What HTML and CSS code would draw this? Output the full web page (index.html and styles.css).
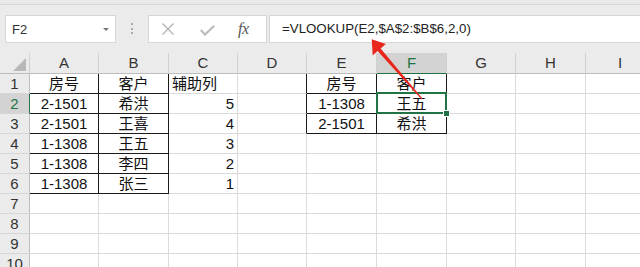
FILE: index.html
```html
<!DOCTYPE html>
<html>
<head>
<meta charset="utf-8">
<link rel="stylesheet" href="styles.css">
</head>
<body>
<div class="top"></div>
<div class="toolbar">
  <div class="namebox"><span class="nb-text">F2</span><span class="nb-arrow"></span></div>
  <div class="dots"><i></i><i></i><i></i></div>
  <div class="fxbox">
    <svg class="ic-x" width="12" height="12" viewBox="0 0 12 12"><path d="M0.5 0.5 L11.5 11.5 M11.5 0.5 L0.5 11.5" stroke="#b4b4b4" stroke-width="1.4" fill="none"/></svg>
    <svg class="ic-check" width="15" height="11" viewBox="0 0 15 11"><path d="M0.8 5 L5 9.6 L14.2 0.8" stroke="#bcbcbc" stroke-width="2.2" fill="none"/></svg>
    <span class="fx">fx</span>
  </div>
  <div class="formula">=VLOOKUP(E2,$A$2:$B$6,2,0)</div>
</div>
<div class="grid">
  <div class="corner"><svg width="13" height="13" viewBox="0 0 13 13"><path d="M13 0 L13 13 L0 13 Z" fill="#b8b8b8"/></svg></div>
  <div class="ch">A</div><div class="ch">B</div><div class="ch">C</div><div class="ch">D</div><div class="ch">E</div><div class="ch sel">F</div><div class="ch">G</div><div class="ch">H</div><div class="ch">I</div>

  <div class="rh">1</div>
  <div class="c ctr br bb">房号</div><div class="c ctr br bb">客户</div><div class="c lft">辅助列</div><div class="c br"></div><div class="c ctr br bb">房号</div><div class="c ctr br bb">客户</div><div class="c"></div><div class="c"></div><div class="c"></div>

  <div class="rh sel">2</div>
  <div class="c ctr br bb">2-1501</div><div class="c ctr br bb">希洪</div><div class="c rgt">5</div><div class="c br"></div><div class="c ctr br bb">1-1308</div><div class="c ctr br bb active">王五<span class="selbox"><span class="handle"></span></span></div><div class="c"></div><div class="c"></div><div class="c"></div>

  <div class="rh">3</div>
  <div class="c ctr br bb">2-1501</div><div class="c ctr br bb">王喜</div><div class="c rgt">4</div><div class="c br"></div><div class="c ctr br bb">2-1501</div><div class="c ctr br bb">希洪</div><div class="c"></div><div class="c"></div><div class="c"></div>

  <div class="rh">4</div>
  <div class="c ctr br bb">1-1308</div><div class="c ctr br bb">王五</div><div class="c rgt">3</div><div class="c"></div><div class="c"></div><div class="c"></div><div class="c"></div><div class="c"></div><div class="c"></div>

  <div class="rh">5</div>
  <div class="c ctr br bb">1-1308</div><div class="c ctr br bb">李四</div><div class="c rgt">2</div><div class="c"></div><div class="c"></div><div class="c"></div><div class="c"></div><div class="c"></div><div class="c"></div>

  <div class="rh">6</div>
  <div class="c ctr br bb">1-1308</div><div class="c ctr br bb">张三</div><div class="c rgt">1</div><div class="c"></div><div class="c"></div><div class="c"></div><div class="c"></div><div class="c"></div><div class="c"></div>

  <div class="rh">7</div>
  <div class="c"></div><div class="c"></div><div class="c"></div><div class="c"></div><div class="c"></div><div class="c"></div><div class="c"></div><div class="c"></div><div class="c"></div>

  <div class="rh">8</div>
  <div class="c"></div><div class="c"></div><div class="c"></div><div class="c"></div><div class="c"></div><div class="c"></div><div class="c"></div><div class="c"></div><div class="c"></div>

  <div class="rh">9</div>
  <div class="c"></div><div class="c"></div><div class="c"></div><div class="c"></div><div class="c"></div><div class="c"></div><div class="c"></div><div class="c"></div><div class="c"></div>

  <div class="rh">10</div>
  <div class="c"></div><div class="c"></div><div class="c"></div><div class="c"></div><div class="c"></div><div class="c"></div><div class="c"></div><div class="c"></div><div class="c"></div>
</div>
<svg class="arrow" width="640" height="267" viewBox="0 0 640 267">
  <polygon points="371.7,39.3 385.8,44 380.6,48.4 422.4,98.4 421.4,99.2 377.6,51 372.7,55.6" fill="#e8261c"/>
</svg>
</body>
</html>
```
FILE: styles.css
```css
html, body {
  margin: 0;
  padding: 0;
}
body {
  width: 640px;
  height: 267px;
  overflow: hidden;
  background: #ffffff;
  font-family: "Liberation Sans", "Noto Sans CJK SC", sans-serif;
  position: relative;
}
.top {
  height: 4px;
  background: #e9e9e9;
  border-bottom: 1px solid #d9d9d9;
}
.toolbar {
  height: 48px;
  box-sizing: border-box;
  background: #ebebeb;
  display: flex;
  align-items: flex-start;
  padding-top: 10px;
}
.namebox {
  margin-left: 5px;
  width: 111px;
  height: 28px;
  box-sizing: border-box;
  border: 1px solid #d6d6d6;
  background: #fff;
  display: flex;
  align-items: center;
  padding-left: 6px;
  font-size: 13px;
  color: #333;
}
.nb-text {
  flex: 1;
}
.nb-arrow {
  width: 0;
  height: 0;
  border-left: 3px solid transparent;
  border-right: 3px solid transparent;
  border-top: 3px solid #777;
  margin-right: 6px;
}
.dots {
  margin-left: 15px;
  margin-top: 8px;
  width: 2px;
  display: flex;
  flex-direction: column;
  gap: 2.5px;
}
.dots i {
  display: block;
  width: 2px;
  height: 2px;
  background: #a8a8a8;
}
.fxbox {
  margin-left: 15px;
  width: 119px;
  height: 28px;
  box-sizing: border-box;
  border: 1px solid #d6d6d6;
  background: #fff;
  display: flex;
  align-items: center;
}
.ic-x {
  margin-left: 13px;
}
.ic-check {
  margin-left: 26px;
  margin-top: 2px;
}
.fx {
  margin-left: 23px;
  font-family: "Liberation Serif", serif;
  font-style: italic;
  font-size: 16px;
  color: #555;
  letter-spacing: -0.5px;
}
.formula {
  margin-left: 2px;
  flex: 1;
  height: 28px;
  box-sizing: border-box;
  border: 1px solid #d6d6d6;
  border-right: none;
  background: #fff;
  padding-left: 12px;
  font-size: 13.3px;
  line-height: 26px;
  color: #222;
  white-space: nowrap;
}
.grid {
  display: grid;
  grid-template-columns: 30px 69px 70px 69px 69px 70px 70px 69px 70px 69px;
  grid-template-rows: 21px;
  grid-auto-rows: 20px;
  width: 655px;
}
.grid > div {
  box-sizing: border-box;
  border-right: 1px solid #dadada;
  border-bottom: 1px solid #dadada;
}
.corner {
  background: #ebebeb;
  display: flex;
  justify-content: flex-end;
  align-items: flex-end;
  padding: 0 3px 2px 0;
}
.grid > .corner,
.grid > .ch {
  border-bottom-color: #bdbdbd;
  border-right-color: #d0d0d0;
}
.ch {
  background: #ebebeb;
  font-size: 15px;
  line-height: 20px;
  text-align: center;
  color: #333;
}
.grid > .ch.sel {
  background: #d3d3d3;
  color: #217346;
  border-bottom: 1px solid #217346;
}
.grid > .rh {
  background: #ebebeb;
  font-size: 15px;
  line-height: 18px;
  padding-top: 1px;
  text-align: center;
  color: #333;
  border-right-color: #bdbdbd;
  border-bottom-color: #d6d6d6;
}
.grid > .rh.sel {
  background: #d3d3d3;
  color: #217346;
  border-right: 1px solid #217346;
}
.c {
  font-size: 15px;
  line-height: 18px;
  padding-top: 1px;
  color: #111;
  white-space: nowrap;
}
.ctr {
  text-align: center;
}
.lft {
  text-align: left;
  padding-left: 3px;
}
.rgt {
  text-align: right;
  padding-right: 3px;
}
.grid > .br {
  border-right: 1px solid #1a1a1a;
}
.grid > .bb {
  border-bottom: 1px solid #1a1a1a;
}
.active {
  position: relative;
}
.selbox {
  position: absolute;
  left: -1px;
  top: -2px;
  right: -1px;
  bottom: -1px;
  border: 2px solid #217346;
}
.handle {
  position: absolute;
  right: -5px;
  bottom: -5px;
  width: 5px;
  height: 5px;
  background: #217346;
  border: 1px solid #fff;
}
.arrow {
  position: absolute;
  left: 0;
  top: 0;
  pointer-events: none;
}
```
